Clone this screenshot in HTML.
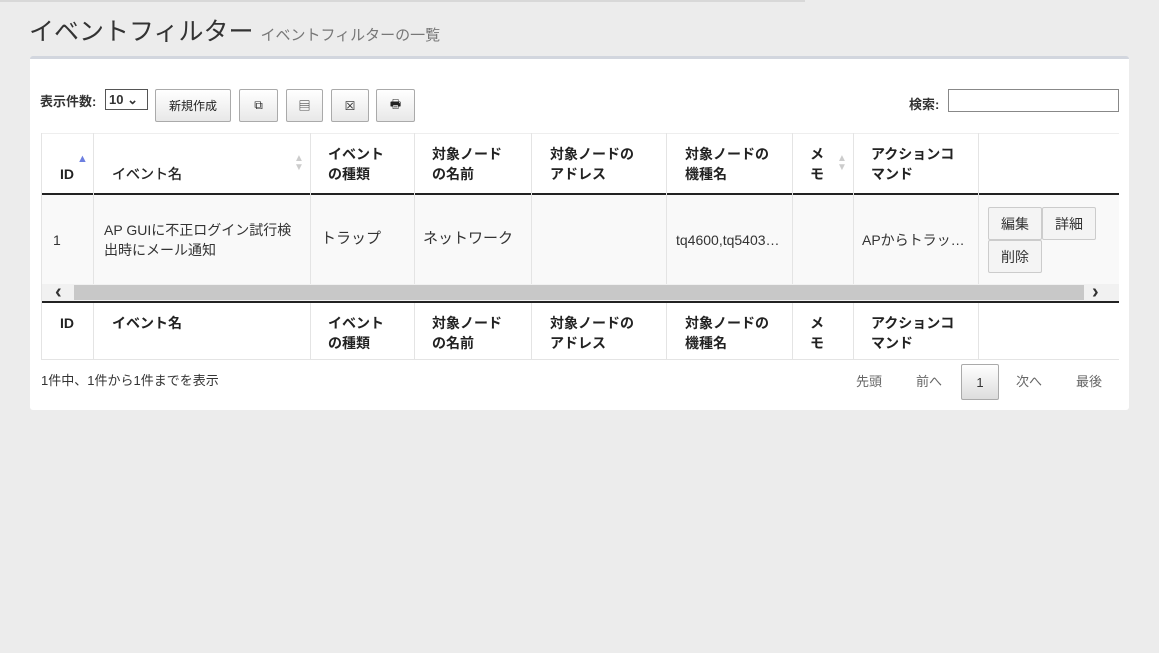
<!DOCTYPE html><html><head><meta charset="utf-8"><style>
*{box-sizing:border-box;margin:0;padding:0}
body{width:1159px;height:653px;background:#ececec;font-family:"Liberation Sans","Noto Sans CJK JP",sans-serif;color:#333;position:relative;overflow:hidden;font-size:14px}
.a{position:absolute}
.box{left:30px;top:56px;width:1099px;height:354px;background:#fff;border-top:3px solid #d2d6de;border-radius:3px}
.btn{position:absolute;top:89px;height:33px;border:1px solid #aaa;border-radius:2px;background:linear-gradient(#fff,#e8e8e8);font-size:12px;display:flex;align-items:center;justify-content:center;color:#222}
.v{position:absolute;width:1px;background:#e4e4e4}
.h{position:absolute;font-weight:bold;font-size:14px;line-height:20px;color:#222}
.c{position:absolute;font-size:14px;line-height:20px;color:#333}
.sb{position:absolute;height:26px;border:1px solid #ccc;border-radius:2px;background:#f3f3f3;font-size:14px;display:flex;align-items:center;justify-content:center}
.ar{position:absolute;font-size:10px;color:#ccc;line-height:9px}
</style></head><body>
<div class="a" style="left:0;top:0;width:805px;height:2px;background:#d8d8d8"></div>
<div class="a" style="left:29px;top:12px;font-size:25px;color:#333">イベントフィルター <span style="font-size:15px;color:#777">イベントフィルターの一覧</span></div>
<div class="a box"></div>
<div class="a" style="left:40px;top:91px;font-size:13px;font-weight:bold">表示件数:</div>
<div class="a" style="left:105px;top:89px;width:43px;height:21px;border:1px solid #555;font-size:13px;font-weight:bold;padding:2px 3px">10 ⌄</div>
<div class="btn" style="left:155px;width:76px">新規作成</div>
<div class="btn" style="left:239px;width:39px">⧉</div>
<div class="btn" style="left:286px;width:37px">▤</div>
<div class="btn" style="left:331px;width:38px">☒</div>
<div class="btn" style="left:376px;width:39px">🖶</div>
<div class="a" style="left:909px;top:94px;font-size:13px;font-weight:bold">検索:</div>
<div class="a" style="left:948px;top:89px;width:171px;height:23px;border:1px solid #888"></div>
<div class="a" style="left:41px;top:133px;width:1078px;height:1px;background:#eee"></div>
<div class="a" style="left:41px;top:193px;width:1078px;height:2px;background:#222"></div>
<div class="a" style="left:41px;top:195px;width:1078px;height:89px;background:#f9f9f9"></div>
<div class="a" style="left:41px;top:284px;width:1078px;height:17px;background:#f1f1f1"></div>
<div class="a" style="left:74px;top:285px;width:1010px;height:15px;background:#c8c8c8"></div>
<div class="a" style="left:55px;top:281px;font-size:20px;font-weight:bold;color:#333">‹</div>
<div class="a" style="left:1092px;top:281px;font-size:20px;font-weight:bold;color:#333">›</div>
<div class="a" style="left:41px;top:301px;width:1078px;height:2px;background:#222"></div>
<div class="a" style="left:41px;top:359px;width:1078px;height:1px;background:#e4e4e4"></div>
<div class="v" style="left:41px;top:133px;height:227px"></div>
<div class="v" style="left:93px;top:133px;height:151px"></div><div class="v" style="left:93px;top:303px;height:56px"></div>
<div class="v" style="left:310px;top:133px;height:151px"></div><div class="v" style="left:310px;top:303px;height:56px"></div>
<div class="v" style="left:414px;top:133px;height:151px"></div><div class="v" style="left:414px;top:303px;height:56px"></div>
<div class="v" style="left:531px;top:133px;height:151px"></div><div class="v" style="left:531px;top:303px;height:56px"></div>
<div class="v" style="left:666px;top:133px;height:151px"></div><div class="v" style="left:666px;top:303px;height:56px"></div>
<div class="v" style="left:792px;top:133px;height:151px"></div><div class="v" style="left:792px;top:303px;height:56px"></div>
<div class="v" style="left:853px;top:133px;height:151px"></div><div class="v" style="left:853px;top:303px;height:56px"></div>
<div class="v" style="left:978px;top:133px;height:151px"></div><div class="v" style="left:978px;top:303px;height:56px"></div>
<div class="h" style="left:60px;top:164px">ID</div>
<div class="a" style="left:77px;top:153px;font-size:11px;color:#6d7fe0">▲</div>
<div class="h" style="left:112px;top:164px;font-weight:normal;-webkit-text-stroke:0.3px #222">イベント名</div>
<div class="ar" style="left:294px;top:154px">▲<br>▼</div>
<div class="h" style="left:328px;top:144px">イベント<br>の種類</div>
<div class="h" style="left:432px;top:144px">対象ノード<br>の名前</div>
<div class="h" style="left:550px;top:144px">対象ノードの<br>アドレス</div>
<div class="h" style="left:685px;top:144px">対象ノードの<br>機種名</div>
<div class="h" style="left:810px;top:144px">メ<br>モ</div>
<div class="ar" style="left:837px;top:154px">▲<br>▼</div>
<div class="h" style="left:871px;top:144px">アクションコ<br>マンド</div>
<div class="c" style="left:53px;top:230px">1</div>
<div class="c" style="left:104px;top:220px">AP GUIに不正ログイン試行検<br>出時にメール通知</div>
<div class="c" style="left:321px;top:229px;font-size:15px">トラップ</div>
<div class="c" style="left:423px;top:229px;font-size:15px">ネットワーク</div>
<div class="c" style="left:676px;top:230px">tq4600,tq5403…</div>
<div class="c" style="left:862px;top:230px">APからトラッ…</div>
<div class="sb" style="left:988px;top:207px;width:54px;height:33px;background:#f4f4f4">編集</div>
<div class="sb" style="left:1042px;top:207px;width:54px;height:33px;background:#f4f4f4">詳細</div>
<div class="sb" style="left:988px;top:240px;width:54px;height:33px;background:#f4f4f4">削除</div>
<div class="h" style="left:60px;top:313px">ID</div>
<div class="h" style="left:112px;top:313px">イベント名</div>
<div class="h" style="left:328px;top:313px">イベント<br>の種類</div>
<div class="h" style="left:432px;top:313px">対象ノード<br>の名前</div>
<div class="h" style="left:550px;top:313px">対象ノードの<br>アドレス</div>
<div class="h" style="left:685px;top:313px">対象ノードの<br>機種名</div>
<div class="h" style="left:810px;top:313px">メ<br>モ</div>
<div class="h" style="left:871px;top:313px">アクションコ<br>マンド</div>
<div class="c" style="left:41px;top:371px;font-size:13px">1件中、1件から1件までを表示</div>
<div class="c" style="left:856px;top:372px;font-size:13px;color:#666">先頭</div>
<div class="c" style="left:916px;top:372px;font-size:13px;color:#666">前へ</div>
<div class="sb" style="left:961px;top:364px;width:38px;height:36px;background:linear-gradient(#fff,#ddd);border-color:#aaa;font-size:13px">1</div>
<div class="c" style="left:1016px;top:372px;font-size:13px;color:#666">次へ</div>
<div class="c" style="left:1076px;top:372px;font-size:13px;color:#666">最後</div>
</body></html>
